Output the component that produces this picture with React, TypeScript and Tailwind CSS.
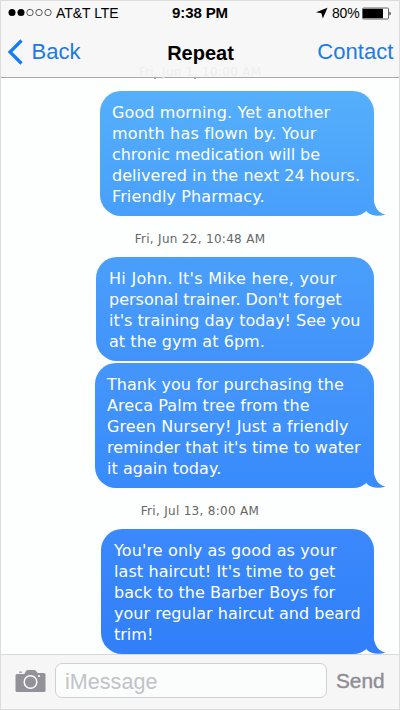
import React from "react";

type Line = [text: string, tracking: string];

type Message = {
  lines: Line[];
  box: string;
  text: string;
  fill: string;
  tail?: string;
};

const first: Message = {
  lines: [
    ["Good morning. Yet another", "tracking-[0.11px]"],
    ["month has flown by. Your", "tracking-[0.18px]"],
    ["chronic medication will be", "tracking-[-0.05px]"],
    ["delivered in the next 24 hours.", "tracking-[0.05px]"],
    ["Friendly Pharmacy.", "tracking-[0.12px]"],
  ],
  box: "w-[274px] h-[125px]",
  text: "pl-[12px]",
  fill: "bg-linear-to-b from-[#56affb] to-[#489ffb]",
  tail: "text-[#49a1fb]",
};
const second: Message = {
  lines: [
    ["Hi John. It's Mike here, your", "tracking-[0.28px]"],
    ["personal trainer. Don't forget", "tracking-[0px]"],
    ["it's training day today! See you", "tracking-[0px]"],
    ["at the gym at 6pm.", "tracking-[0.05px]"],
  ],
  box: "w-[278px] h-[104px]",
  text: "pl-[13px]",
  fill: "bg-linear-to-b from-[#4b9ffb] to-[#4193fb]",
};
const third: Message = {
  lines: [
    ["Thank you for purchasing the", "tracking-[0.05px]"],
    ["Areca Palm tree from the", "tracking-[0.09px]"],
    ["Green Nursery! Just a friendly", "tracking-[0.12px]"],
    ["reminder that it's time to water", "tracking-[0.05px]"],
    ["it again today.", "tracking-[0.05px]"],
  ],
  box: "w-[279px] h-[125px]",
  text: "pl-[12px]",
  fill: "bg-linear-to-b from-[#4596fb] to-[#388bfb]",
  tail: "text-[#398cfb]",
};
const fourth: Message = {
  lines: [
    ["You're only as good as your", "tracking-[0.12px]"],
    ["last haircut! It's time to get", "tracking-[0.09px]"],
    ["back to the Barber Boys for", "tracking-[0.03px]"],
    ["your regular haircut and beard", "tracking-[0.03px]"],
    ["trim!", "tracking-[0px]"],
  ],
  box: "w-[273px] h-[125px]",
  text: "pl-[13px]",
  fill: "bg-linear-to-b from-[#3b89fb] to-[#317ff9]",
  tail: "text-[#327ff9]",
};

function Bubble({ message }: { message: Message }) {
  return (
    <div className={`relative rounded-[21px] ${message.box} ${message.fill}`}>
      <div className={`pt-[11px] text-[16px] leading-[21px] whitespace-pre text-white ${message.text}`}>
        {message.lines.map(([text, tracking]) => (
          <p key={text} className={tracking}>{text}</p>
        ))}
      </div>
      {message.tail && (
        <svg className={`absolute right-[-12px] bottom-0 h-6 w-6 ${message.tail}`} viewBox="0 0 24 24" fill="currentColor">
          <path d="M9 2H11.8V6C11.8 13 15 20.8 23.5 22.6C17 24.6 9.5 24.5 4.5 19.5Z" />
        </svg>
      )}
    </div>
  );
}

function Stamp({ children }: { children: string }) {
  return (
    <div className="mr-[-26px] flex h-[41px] w-[400px] items-center justify-center pt-[5px] text-[12px] leading-4 tracking-[0.3px] text-[#666]">
      {children}
    </div>
  );
}

export default function App() {
  return (
    <div className="relative flex h-[710px] w-[400px] flex-col overflow-hidden bg-[#fcfffe] font-['Liberation_Sans',Arial,sans-serif]">
      <header className="relative h-[78px] shrink-0 border-b border-[#a9a9ab] bg-[#f7f7f7]">
        <div className="grid h-[26px] grid-cols-[163px_74px_1fr] items-center">
          <div className="flex items-center pl-[8px]">
            <svg width="44" height="10" viewBox="0 0 44 10" className="shrink-0">
              <circle cx="4" cy="4.5" r="3.5" fill="#000" />
              <circle cx="13" cy="4.5" r="3.5" fill="#000" />
              <g fill="none" stroke="#333" strokeWidth=".8">
                <circle cx="22" cy="4.5" r="3.2" />
                <circle cx="31" cy="4.5" r="3.2" />
                <circle cx="40" cy="4.5" r="3.2" />
              </g>
            </svg>
            <span className="ml-[4px] text-[14px] leading-4 tracking-[-0.05px] whitespace-nowrap text-black">AT&amp;T LTE</span>
          </div>
          <div className="text-center text-[15px] leading-4 font-bold tracking-[-0.1px] whitespace-nowrap">9:38 PM</div>
          <div className="flex items-center pl-[79px]">
            <svg width="12" height="12" viewBox="0 0 12 12" className="shrink-0">
              <path d="M11.5 .8L0 5.2L5.4 6.2L6.8 11.5Z" fill="#000" />
            </svg>
            <span className="ml-[4px] text-[14px] leading-4 tracking-[-0.2px]">80%</span>
            <svg width="30" height="13" viewBox="0 0 30 13" className="ml-[3px] shrink-0">
              <rect x=".5" y="1" width="26" height="11" rx="1" fill="#fff" stroke="#555" strokeWidth=".9" />
              <rect x="1" y="1.8" width="20" height="9.4" fill="#000" />
              <path d="M27.5 4.5Q30 6.5 27.5 8.5Z" fill="#222" />
            </svg>
          </div>
        </div>
        <div className="grid h-[51px] grid-cols-[120px_161px_1fr] pt-[13px]">
          <div className="flex items-start pl-[7px] text-[22px] leading-[26px] text-[#2079e8]">
            <svg width="16" height="26" viewBox="0 0 16 26">
              <path d="M14.5 1.5L3 13L14.5 24.5" fill="none" stroke="#147cf4" strokeWidth="3.2" />
            </svg>
            <span className="ml-[8.5px]">Back</span>
          </div>
          <div className="pt-px text-center text-[20px] leading-[26px] font-bold text-black">Repeat</div>
          <div className="pr-[6.5px] text-right text-[22px] leading-[26px] tracking-[0.05px] text-[#2079e8]">Contact</div>
        </div>
        <div className="absolute top-[65px] left-0 w-full text-center font-['DejaVu_Sans',sans-serif] text-[12px] leading-[14px] tracking-[0.3px] text-[#f0eeed]">Fri, Jun 1, 10:00 AM</div>
        <div className="absolute top-[78px] left-[154px] h-px w-[42px] border-x-2 border-[#a4a4a4]" />
      </header>

      <main className="flex flex-1 flex-col items-end pt-[13px] pr-[26px] font-['DejaVu_Sans',Verdana,sans-serif]">
        <Bubble message={first} />
        <Stamp>Fri, Jun 22, 10:48 AM</Stamp>
        <Bubble message={second} />
        <div className="h-[2px]" />
        <Bubble message={third} />
        <Stamp>Fri, Jul 13, 8:00 AM</Stamp>
        <Bubble message={fourth} />
      </main>

      <footer className="flex h-[56px] shrink-0 border-t border-[#d8d8da] bg-[#f6f6f7] pt-[8px] pl-[15px]">
        <svg width="31" height="24" viewBox="0 0 31 24" className="mt-[6px] shrink-0">
          <path d="M2 5H9.3L11 2Q11.7 1 12.8 1H19.2Q20.3 1 21 2L22.7 4H29Q30.5 4 30.5 5.5V21.5Q30.5 23 29 23H2Q.5 23 .5 21.5V6.5Q.5 5 2 5ZM4 3.8Q4 2.6 5 2.6H6.2Q7.2 2.6 7.2 3.8Z" fill="#929298" />
          <circle cx="15.5" cy="13" r="6.3" fill="none" stroke="#fff" strokeWidth="1.5" />
          <circle cx="24" cy="7" r="1" fill="#fff" />
        </svg>
        <div className="ml-[9px] h-[35px] w-[272px] rounded-[7px] border border-[#cfd0d4] bg-[#fbfdfc] pl-[9px] text-[21.6px] leading-[35px] text-[#c2c2c8]">iMessage</div>
        <div className="ml-[9px] text-[20.8px] leading-[36px] text-[#8d8d93] [-webkit-text-stroke:0.4px_#8d8d93]">Send</div>
      </footer>
      <div className="pointer-events-none absolute inset-0 border border-[#dcdcdc]" />
    </div>
  );
}
